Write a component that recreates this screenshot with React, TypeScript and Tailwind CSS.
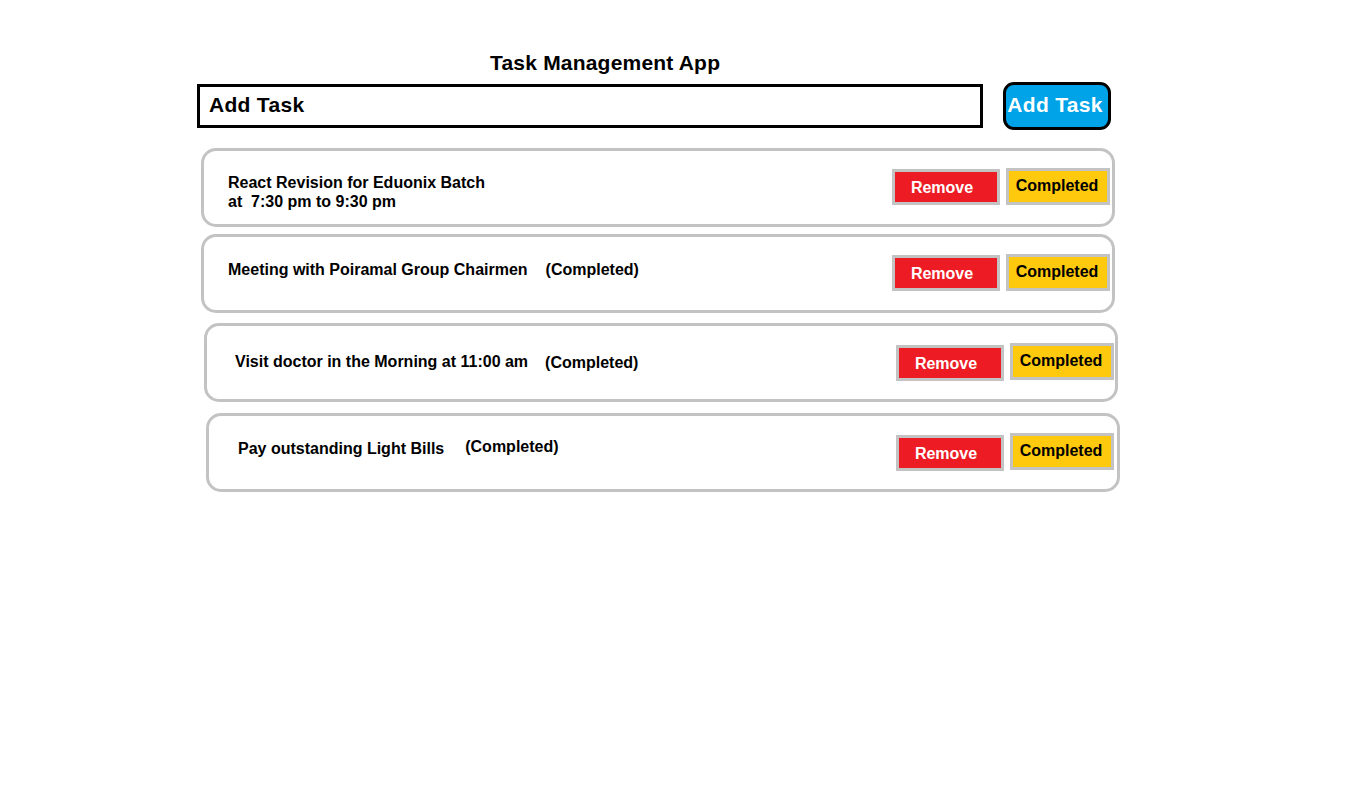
import React from "react";

type Task = {
  lines: string[];
  done: boolean;
  ml: string;
  mt: string;
  textPl: string;
  textPt: string;
  tagMl: string;
  tagMt: string;
  btnRow: string;
  removeMt: string;
  completedMt: string;
};

const tasks: Task[] = [
  {
    lines: ["React Revision for Eduonix Batch", "at\u00a0 7:30 pm to 9:30 pm"],
    done: false,
    ml: "ml-[201px]",
    mt: "mt-[18px]",
    textPl: "pl-[24px]",
    textPt: "pt-[22px]",
    tagMl: "ml-[21px]",
    tagMt: "mt-0",
    btnRow: "pr-[2px]",
    removeMt: "mt-[18px]",
    completedMt: "mt-[17px]",
  },
  {
    lines: ["Meeting with Poiramal Group Chairmen"],
    done: true,
    ml: "ml-[201px]",
    mt: "mt-[7px]",
    textPl: "pl-[24px]",
    textPt: "pt-[23px]",
    tagMl: "ml-[18px]",
    tagMt: "mt-0",
    btnRow: "pr-[2px]",
    removeMt: "mt-[18px]",
    completedMt: "mt-[17px]",
  },
  {
    lines: ["Visit doctor in the Morning at 11:00 am"],
    done: true,
    ml: "ml-[204px]",
    mt: "mt-[10px]",
    textPl: "pl-[28px]",
    textPt: "pt-[26px]",
    tagMl: "ml-[17px]",
    tagMt: "mt-[1px]",
    btnRow: "pr-[1px]",
    removeMt: "mt-[19px]",
    completedMt: "mt-[17px]",
  },
  {
    lines: ["Pay outstanding Light Bills"],
    done: true,
    ml: "ml-[206px]",
    mt: "mt-[11px]",
    textPl: "pl-[29px]",
    textPt: "pt-[23px]",
    tagMl: "ml-[21px]",
    tagMt: "-mt-[2px]",
    btnRow: "pr-[3px]",
    removeMt: "mt-[19px]",
    completedMt: "mt-[17px]",
  },
];

function TaskCard({ t }: { t: Task }) {
  return (
    <div
      className={`${t.ml} ${t.mt} flex h-[79px] w-[914px] items-start rounded-[15px] border-[3px] border-[#c3c3c3] bg-white`}
    >
      <div className={`${t.textPl} ${t.textPt} flex items-start text-[16px] font-bold leading-[19px] text-black`}>
        <div>
          {t.lines.map((l, i) => (
            <div key={i} className="whitespace-pre">
              {l}
            </div>
          ))}
        </div>
        {t.done && <div className={`${t.tagMl} ${t.tagMt}`}>(Completed)</div>}
      </div>
      <div className={`ml-auto flex items-start gap-[6px] ${t.btnRow}`}>
        <button
          className={`${t.removeMt} flex h-[36px] w-[108px] items-center justify-center border-[3px] border-[#c3c3c3] bg-[#ed1c24] pt-[1px] pr-[8px] text-[16px] font-bold text-white`}
        >
          Remove
        </button>
        <button
          className={`${t.completedMt} flex h-[37px] w-[104px] items-center justify-center border-[3px] border-[#c3c3c3] bg-[#ffc90e] pb-[1px] pr-[2px] text-[16px] font-bold text-black`}
        >
          Completed
        </button>
      </div>
    </div>
  );
}

export default function App() {
  return (
    <div
      className="min-h-[792px] w-[1346px] bg-white pt-[51px] text-black"
      style={{ fontFamily: '"Liberation Sans", Arial, sans-serif' }}
    >
      <h1 className="pl-[490px] text-[21px] font-bold leading-[24px] tracking-[0.2px]">Task Management App</h1>
      <div className="ml-[197px] mt-[7px] flex items-center gap-[20px]">
        <div className="flex h-[44px] w-[786px] items-center border-[3px] border-black pl-[9px] pb-[3px] text-[21px] font-bold tracking-[0.3px]">
          Add Task
        </div>
        <button className="flex h-[48px] w-[108px] items-center justify-center rounded-[11px] border-[3px] border-black bg-[#00a2e8] pb-[3px] pr-[4px] text-[21px] font-bold tracking-[0.3px] text-white">
          Add Task
        </button>
      </div>
      {tasks.map((t, i) => (
        <TaskCard key={i} t={t} />
      ))}
    </div>
  );
}
